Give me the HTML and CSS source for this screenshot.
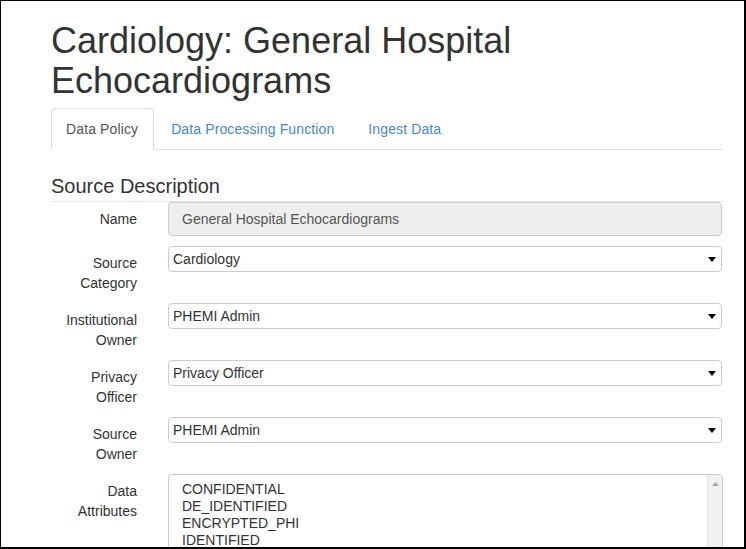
FILE: index.html
```html
<!DOCTYPE html>
<html>
<head>
<meta charset="utf-8">
<link rel="stylesheet" href="styles.css">
</head>
<body>
<div class="frame">
  <div class="container">
    <h1 class="title">Cardiology: General Hospital Echocardiograms</h1>
    <ul class="tabs">
      <li class="tab active"><a>Data Policy</a></li>
      <li class="tab"><a>Data Processing Function</a></li>
      <li class="tab"><a>Ingest Data</a></li>
    </ul>
    <fieldset class="section">
      <legend class="legend">Source Description</legend>
      <div class="form-row">
        <label class="label">Name</label>
        <div class="input disabled">General Hospital Echocardiograms</div>
      </div>
      <div class="form-row">
        <label class="label">Source<br>Category</label>
        <div class="select"><span>Cardiology</span><svg class="caret" width="8" height="5" viewBox="0 0 8 5"><path d="M0 0H8L4 5Z" fill="#000"/></svg></div>
      </div>
      <div class="form-row">
        <label class="label">Institutional<br>Owner</label>
        <div class="select"><span>PHEMI Admin</span><svg class="caret" width="8" height="5" viewBox="0 0 8 5"><path d="M0 0H8L4 5Z" fill="#000"/></svg></div>
      </div>
      <div class="form-row">
        <label class="label">Privacy<br>Officer</label>
        <div class="select"><span>Privacy Officer</span><svg class="caret" width="8" height="5" viewBox="0 0 8 5"><path d="M0 0H8L4 5Z" fill="#000"/></svg></div>
      </div>
      <div class="form-row">
        <label class="label">Source<br>Owner</label>
        <div class="select"><span>PHEMI Admin</span><svg class="caret" width="8" height="5" viewBox="0 0 8 5"><path d="M0 0H8L4 5Z" fill="#000"/></svg></div>
      </div>
      <div class="form-row">
        <label class="label">Data<br>Attributes</label>
        <div class="multi">
          <ul class="options">
            <li>CONFIDENTIAL</li>
            <li>DE_IDENTIFIED</li>
            <li>ENCRYPTED_PHI</li>
            <li>IDENTIFIED</li>
            <li>PUBLIC</li>
          </ul>
          <div class="scrollbar"><svg class="up" width="7" height="4" viewBox="0 0 7 4"><path d="M0 4H7L3.5 0Z" fill="#a3a3a3"/></svg></div>
        </div>
      </div>
    </fieldset>
  </div>
</div>
</body>
</html>
```

FILE: styles.css
```css
html, body {
  margin: 0;
  padding: 0;
  background: #fff;
}

body {
  font-family: "Liberation Sans", Arial, sans-serif;
  font-size: 14px;
  color: #333;
}

.frame {
  width: 746px;
  height: 549px;
  box-sizing: border-box;
  border-top: 1px solid #000;
  border-left: 1px solid #000;
  border-right: 2px solid #000;
  border-bottom: 2px solid #000;
  overflow: hidden;
}

.container {
  padding: 0 21px 0 50px;
}

.title {
  margin: 20px 0 8px;
  font-size: 36px;
  font-weight: normal;
  line-height: 1.1;
  color: #333;
}

.tabs {
  list-style: none;
  margin: 0;
  padding: 0;
  display: flex;
  border-bottom: 1px solid #ddd;
}

.tab {
  margin-right: 2px;
  margin-bottom: -1px;
}

.tab.active {
  margin-right: 1px;
}

.tab a {
  display: block;
  padding: 10px 15px;
  line-height: 20px;
  letter-spacing: 0.12px;
  border: 1px solid transparent;
  border-radius: 4px 4px 0 0;
  color: #428bca;
}

.tab.active a {
  padding: 10px 15px 10px 14px;
  color: #555;
  background: #fff;
  border-color: #ddd #ddd transparent;
}

.section {
  margin: 21px 0 0;
  padding: 0;
  border: 0;
  min-width: 0;
}

.legend {
  display: block;
  width: 100%;
  padding: 1px 0 0;
  margin: 0;
  font-size: 20px;
  line-height: 29px;
  color: #333;
  border-bottom: 1px solid #e5e5e5;
}

.form-row {
  display: grid;
  grid-template-columns: 86px 1fr;
  column-gap: 31px;
  margin-bottom: 10px;
  align-items: start;
}

.label {
  text-align: right;
  padding-top: 7px;
  line-height: 20px;
  color: #333;
}

.input {
  height: 34px;
  box-sizing: border-box;
  padding: 6px 13px;
  line-height: 20px;
  border: 1px solid #ccc;
  border-radius: 4px;
  color: #555;
  margin-right: 1px;
}

.input.disabled {
  background: #eee;
}

.select {
  height: 26px;
  box-sizing: border-box;
  display: flex;
  align-items: center;
  justify-content: space-between;
  padding: 0 5px 0 4px;
  border: 1px solid #ccc;
  border-radius: 4px;
  color: #333;
  margin-right: 1px;
}

.select span {
  line-height: 20px;
}

.caret {
  display: block;
}

.multi {
  height: 120px;
  box-sizing: border-box;
  border: 1px solid #ccc;
  border-radius: 4px;
  display: flex;
  overflow: hidden;
}

.options {
  list-style: none;
  flex: 1;
  margin: 0;
  padding: 6px 13px;
  line-height: 17px;
  color: #333;
}

.scrollbar {
  width: 15px;
  background: #f1f1f1;
  border-left: 1px solid #e8e8e8;
  display: flex;
  justify-content: center;
  padding-top: 7px;
  box-sizing: border-box;
}

.up {
  display: block;
}
```
